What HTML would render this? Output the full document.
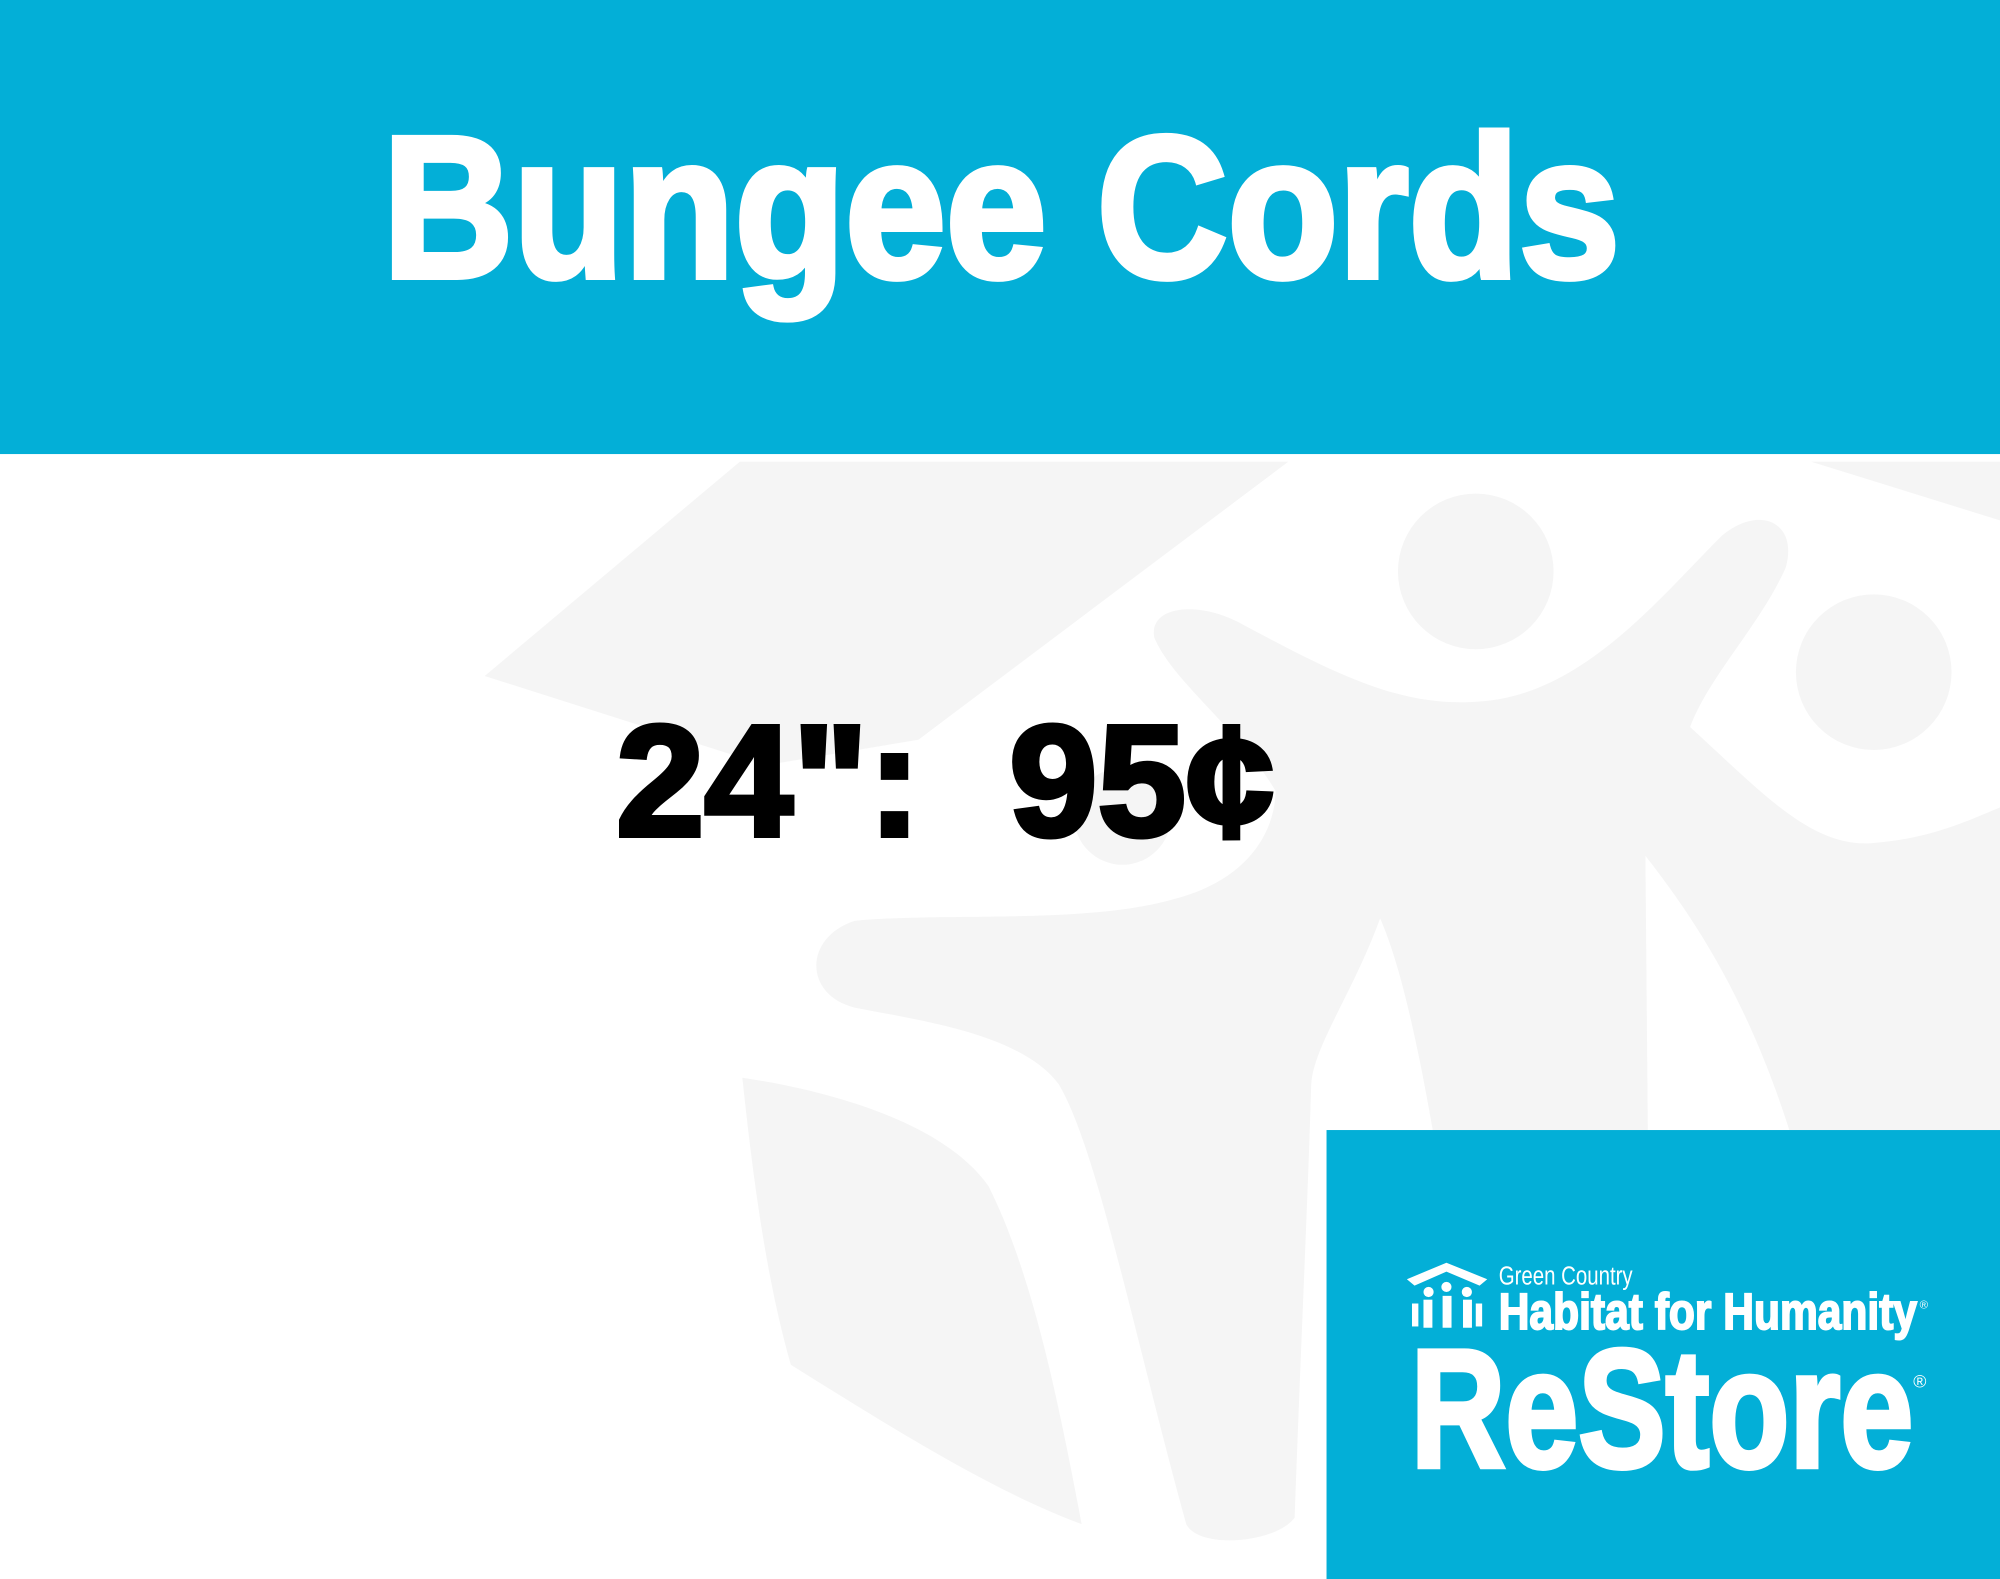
<!DOCTYPE html>
<html><head><meta charset="utf-8"><style>
html,body{margin:0;padding:0;background:#fff;}
svg{display:block;}
</style></head><body>
<svg width="2000" height="1579" viewBox="0 0 1568 1238" preserveAspectRatio="none" xmlns="http://www.w3.org/2000/svg">
<rect width="1568" height="1238" fill="#fff"/>
<g fill="#f5f5f5">
<polygon points="380,530 580,362 1010,362 720,580 600,600"/>
<polygon points="1420,362 1568,362 1568,408"/>
<circle cx="1157" cy="448" r="61"/>
<circle cx="1469" cy="527" r="61"/>
<circle cx="880" cy="640" r="38"/>
<path d="M905,500 C900,475 940,470 975,490 C1050,530 1100,555 1160,550 C1240,545 1300,470 1350,420 C1380,395 1410,410 1400,445 C1380,490 1340,530 1325,570 C1380,620 1420,665 1468,661 C1510,658 1540,645 1568,633 L1568,1238 L1440,1238 L1433,1000 C1400,850 1360,760 1290,671 L1295,1238 L1150,1238 L1141,1000 C1120,850 1100,760 1082,720 C1060,780 1030,820 1028,850 C1025,950 1020,1050 1015,1190 C1000,1210 940,1215 930,1195 C890,1050 860,900 830,850 C800,810 720,800 670,790 C630,780 630,735 670,722 C740,715 850,725 920,705 C980,690 1000,650 1000,620 C970,570 920,535 905,500 Z"/>
<path d="M582,845 C650,855 740,880 775,930 C810,1000 830,1100 848,1195 C780,1170 700,1120 620,1070 C600,1000 590,920 582,845 Z"/>
</g>
<rect x="0" y="0" width="1568" height="356" fill="#03afd7"/>
<text x="300" y="217" font-family="Liberation Sans, Arial, sans-serif" font-weight="bold" font-size="158" fill="#fff" stroke="#fff" stroke-width="5" textLength="970" lengthAdjust="spacingAndGlyphs">Bungee Cords</text>
<text x="483" y="655" font-family="Liberation Sans, Arial, sans-serif" font-weight="bold" font-size="124" fill="#000" stroke="#000" stroke-width="4" textLength="516" lengthAdjust="spacingAndGlyphs" xml:space="preserve">24":  95¢</text>
<rect x="1040" y="886" width="528" height="352" fill="#03afd7"/>
<g fill="#fff">
<polygon points="1103,1003 1134,990 1166,1003 1160,1008 1134,997 1109,1008"/>
<circle cx="1120" cy="1013" r="4"/><circle cx="1134" cy="1009" r="4"/><circle cx="1150" cy="1013" r="4"/>
<rect x="1116" y="1019" width="7" height="22"/><rect x="1131" y="1016" width="7" height="25"/><rect x="1147" y="1019" width="7" height="22"/>
<rect x="1107" y="1022" width="5" height="18"/><rect x="1157" y="1022" width="5" height="18"/>
</g>
<text x="1175" y="1007" font-family="Liberation Sans Narrow, Liberation Sans, sans-serif" font-size="20" fill="#fff" textLength="105" lengthAdjust="spacingAndGlyphs">Green Country</text>
<text x="1175" y="1042" font-family="Liberation Sans Narrow, Liberation Sans, sans-serif" font-weight="bold" font-size="40" fill="#fff" stroke="#fff" stroke-width="1.5" textLength="328" lengthAdjust="spacingAndGlyphs">Habitat for Humanity</text>
<text x="1505" y="1026" font-family="Liberation Sans, sans-serif" font-size="9" fill="#fff">®</text>
<text x="1106" y="1150" font-family="Liberation Sans Narrow, Liberation Sans, sans-serif" font-weight="bold" font-size="132" fill="#fff" stroke="#fff" stroke-width="4" textLength="394" lengthAdjust="spacingAndGlyphs">ReStore</text>
<text x="1500" y="1088" font-family="Liberation Sans, sans-serif" font-size="14" fill="#fff">®</text>
</svg>
</body></html>
